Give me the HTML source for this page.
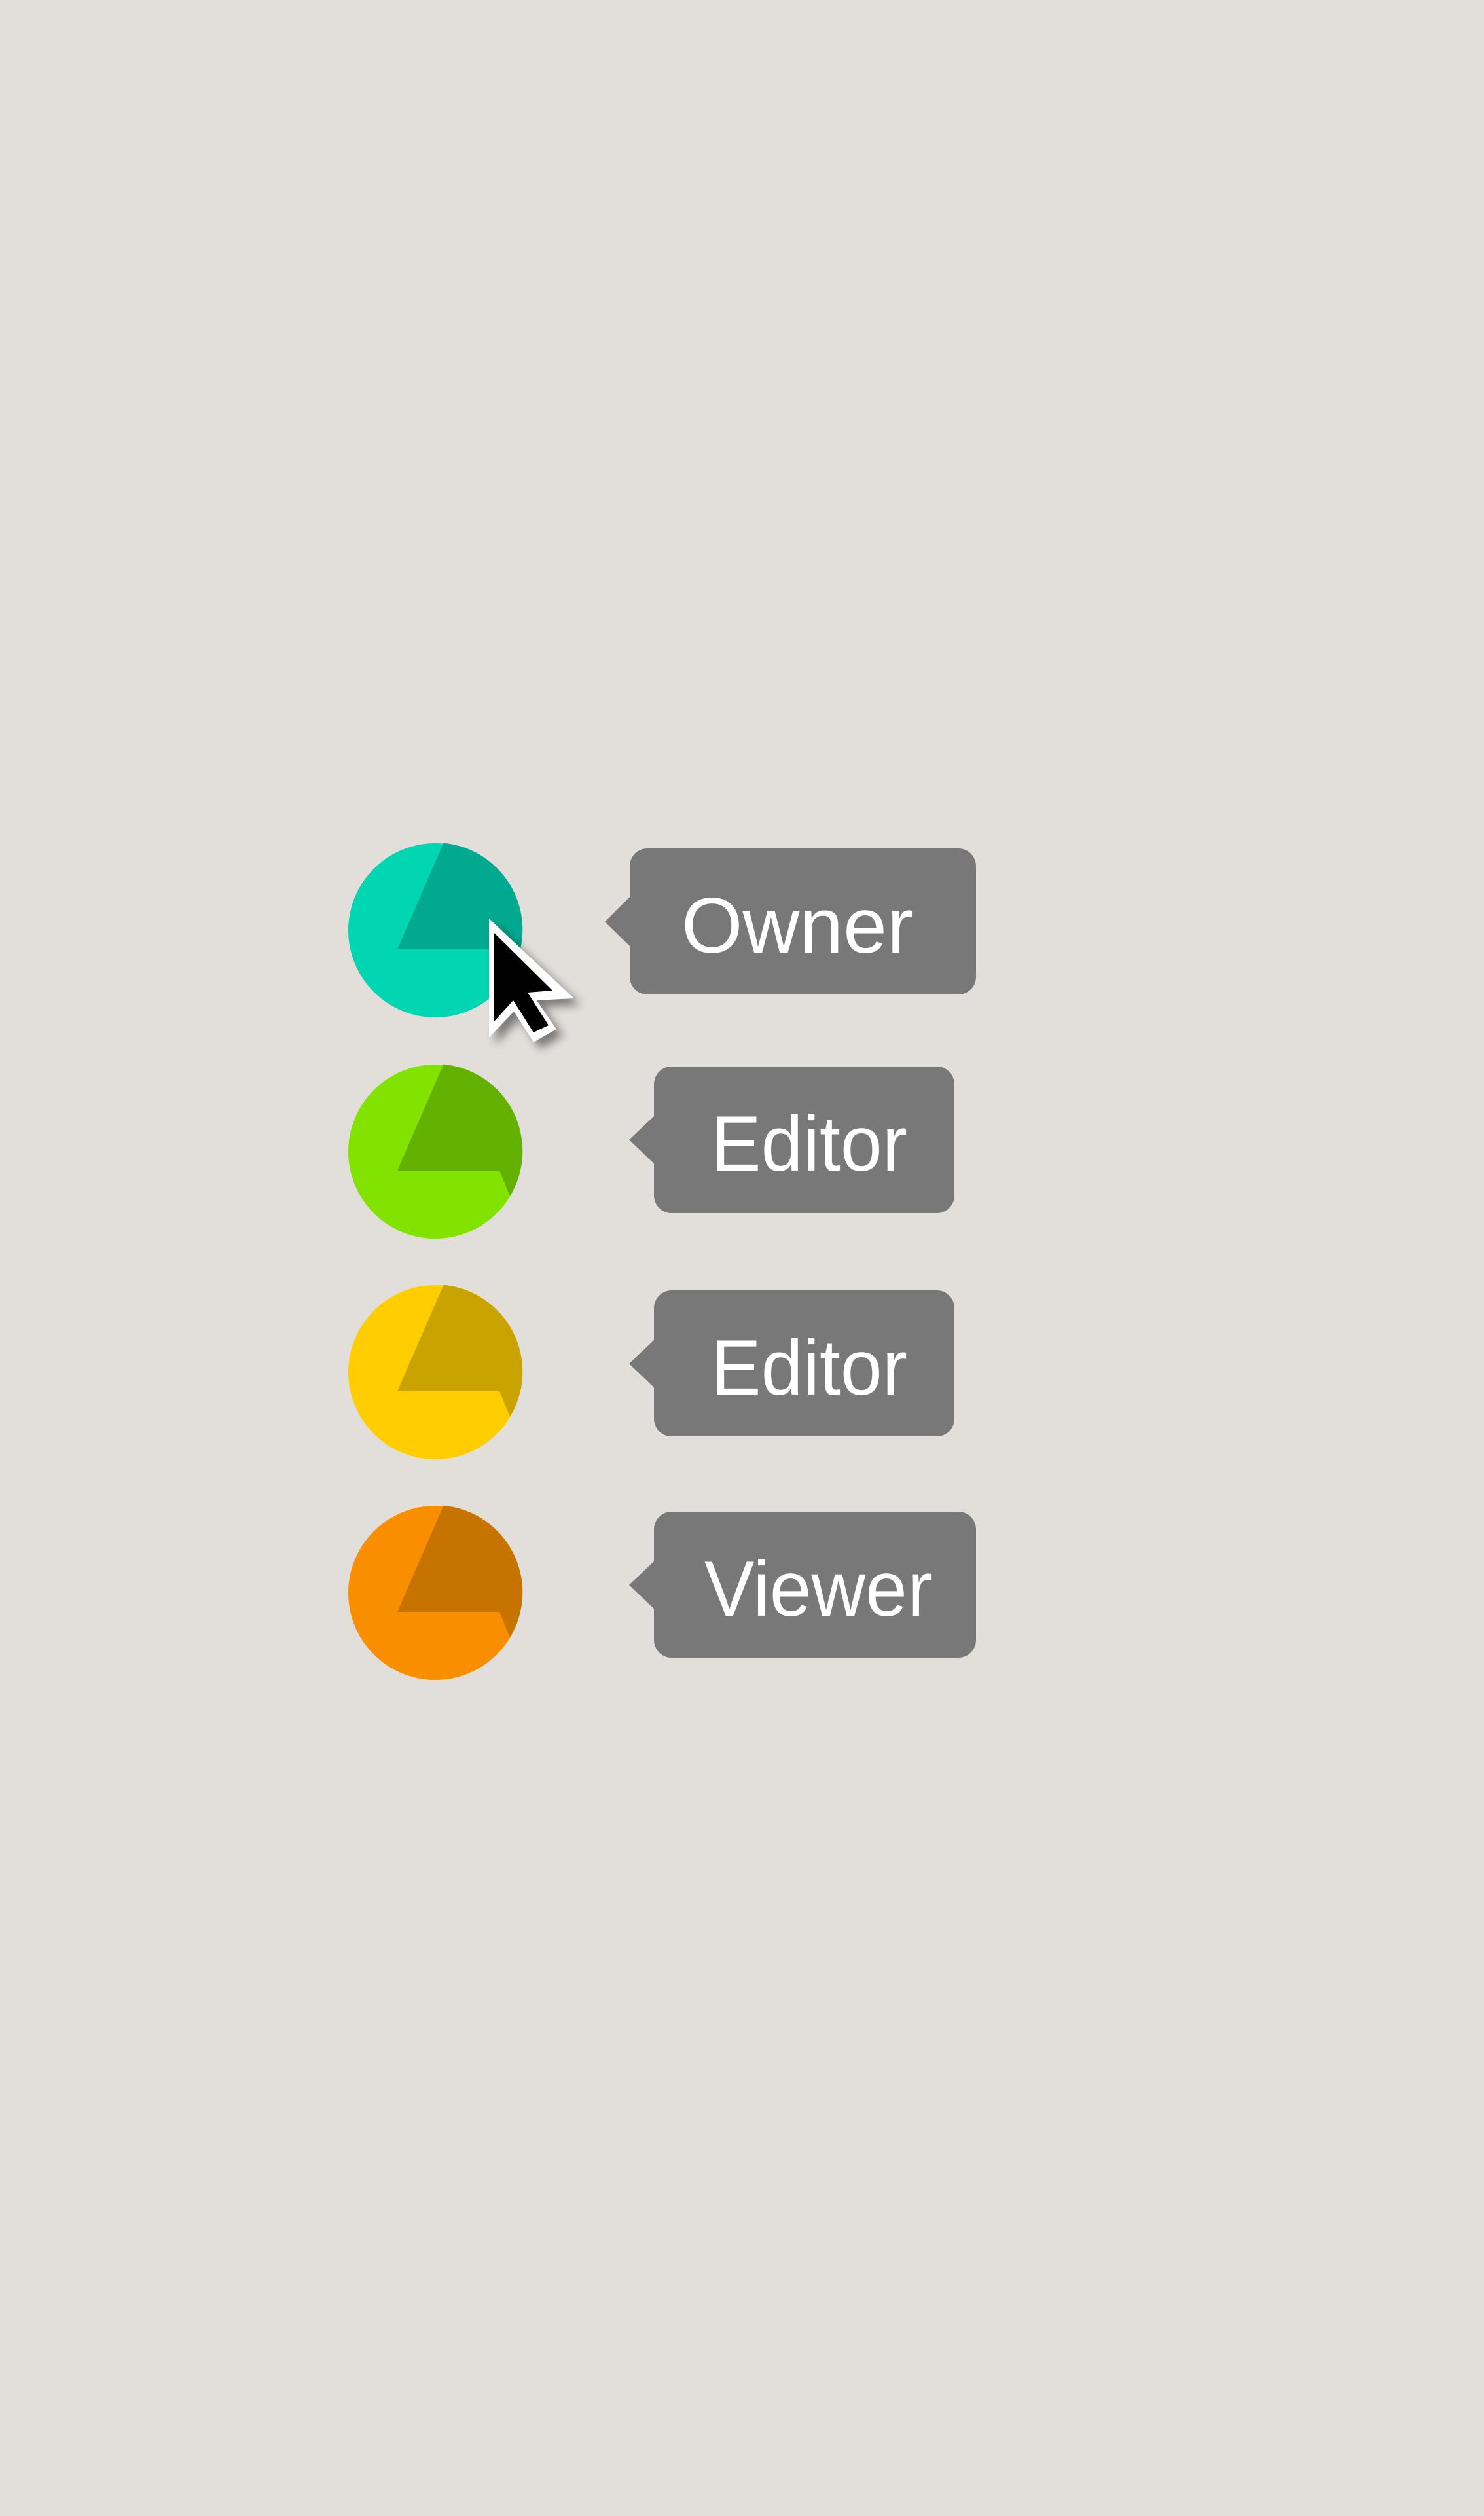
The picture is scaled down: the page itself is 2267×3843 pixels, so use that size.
<!DOCTYPE html>
<html><head><meta charset="utf-8"><style>
html,body{margin:0;padding:0;background:#e2dfdb;}
svg{display:block}
</style></head><body>
<svg width="2267" height="3843" viewBox="0 0 2267 3843" xmlns="http://www.w3.org/2000/svg">
<defs>
<filter id="sh" x="-50%" y="-50%" width="200%" height="200%"><feGaussianBlur stdDeviation="7"/></filter>
</defs>
<rect width="2267" height="3843" fill="#e2dfdb"/>
<!-- circles -->
<g>
<circle cx="665" cy="1421" r="133" fill="#00d6b1"/>
<path d="M677.5 1287.6 A133 133 0 0 1 779 1489 L763 1450 L607 1450 Z" fill="#00a98f"/>
<circle cx="665" cy="1759" r="133" fill="#82e200"/>
<path d="M677.5 1625.6 A133 133 0 0 1 779 1827 L763 1788 L607 1788 Z" fill="#63b100"/>
<circle cx="665" cy="2096" r="133" fill="#ffcd00"/>
<path d="M677.5 1962.6 A133 133 0 0 1 779 2164 L763 2125 L607 2125 Z" fill="#c9a300"/>
<circle cx="665" cy="2433" r="133" fill="#f98f00"/>
<path d="M677.5 2299.6 A133 133 0 0 1 779 2501 L763 2462 L607 2462 Z" fill="#c67300"/>
</g>
<!-- tooltips -->
<g fill="#787878">
<rect x="962" y="1296" width="529" height="223" rx="27"/>
<polygon points="964,1368 924,1408 964,1447"/>
<rect x="999" y="1629" width="459" height="224" rx="27"/>
<polygon points="1001,1703 961,1741 1001,1779"/>
<rect x="999" y="1971" width="459" height="223" rx="27"/>
<polygon points="1001,2045 961,2083 1001,2121"/>
<rect x="999" y="2309" width="492" height="223" rx="27"/>
<polygon points="1001,2383 961,2421 1001,2459"/>
</g>
<g fill="#ffffff" font-family="'Liberation Sans', sans-serif" font-size="120">
<text x="1041" y="1455" textLength="354" lengthAdjust="spacingAndGlyphs">Owner</text>
<text x="1086" y="1788" textLength="300" lengthAdjust="spacingAndGlyphs">Editor</text>
<text x="1086" y="2130" textLength="300" lengthAdjust="spacingAndGlyphs">Editor</text>
<text x="1076" y="2468" textLength="348" lengthAdjust="spacingAndGlyphs">Viewer</text>
</g>
<!-- cursor -->
<polygon points="757,1413 887,1535 830,1538 860,1582 825,1602 795,1555 757,1595" fill="#000" opacity="0.45" filter="url(#sh)"/>
<polygon points="747,1403 877,1525 820,1528 850,1572 815,1592 785,1545 747,1585" fill="#fff"/>
<polygon points="755,1425 844,1513 806,1516 838,1566 815,1577 784,1528 755,1560" fill="#000"/>
</svg>
</body></html>
